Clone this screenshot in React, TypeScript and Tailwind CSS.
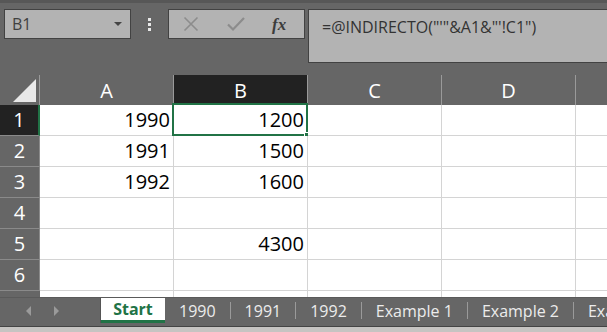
import React from "react";

const cols = ["A", "B", "C", "D"];
const data: Record<number, [string, string]> = {
  1: ["1990", "1200"],
  2: ["1991", "1500"],
  3: ["1992", "1600"],
  5: ["", "4300"],
};

function Row({ n }: { n: number }) {
  const d = data[n] || ["", ""];
  const sel = n === 1;
  return (
    <div className="flex h-[31px]">
      <div
        className={
          sel
            ? "w-[40px] h-full shrink-0 bg-[#222222] text-white flex items-center justify-center border-b border-[#8a8a8a] border-r-2 border-r-[#217346] text-[20px] leading-none"
            : "w-[40px] h-full shrink-0 bg-[#666666] text-white flex items-center justify-center border-b border-[#8a8a8a] border-r border-r-[#8a8a8a] text-[20px] leading-none"
        }
      >
        {n}
      </div>
      {[0, 1, 2, 3].map((i) => (
        <div
          key={i}
          className="relative w-[134px] h-full shrink-0 bg-white border-r border-b border-[#d4d4d4] flex items-end justify-end pr-[3px] pb-[5px] text-[20px] leading-none text-black"
        >
          {i < 2 ? d[i] : ""}
          {sel && i === 1 && (
            <>
              <div className="absolute left-[-2px] top-[-2px] w-[136px] h-[33px] border-2 border-[#217346]" />
              <div className="absolute right-[-4px] bottom-[-4px] w-[7px] h-[7px] bg-[#217346] border border-white" />
            </>
          )}
        </div>
      ))}
      <div className="flex-1 h-full bg-white border-b border-[#d4d4d4]" />
    </div>
  );
}

export default function App() {
  const tabs = ["1990", "1991", "1992", "Example 1", "Example 2", "Example 3"];
  return (
    <div className="w-[607px] h-[332px] overflow-hidden bg-[#666666] font-['Open_Sans',sans-serif] flex flex-col">
      <div className="h-[3px] bg-[#575757] shrink-0" />
      {/* top formula area */}
      <div className="h-[72px] shrink-0 flex items-start pt-[6px]">
        <div className="ml-[4px] w-[127px] h-[30px] shrink-0 border border-[#424242] bg-[#b3b3b3] flex items-center pl-[7px] pr-[8px]">
          <span className="text-[16px] text-[#404040] leading-none">B1</span>
          <span className="ml-auto w-0 h-0 border-l-[4px] border-r-[4px] border-t-[4px] border-l-transparent border-r-transparent border-t-[#444444]" />
        </div>
        <div className="w-[37px] h-[30px] shrink-0 flex flex-col items-center justify-center gap-[2px]">
          <span className="w-[3px] h-[3px] bg-[#e8e8e8]" />
          <span className="w-[3px] h-[3px] bg-[#e8e8e8]" />
          <span className="w-[3px] h-[3px] bg-[#e8e8e8]" />
        </div>
        <div className="w-[137px] h-[30px] shrink-0 border border-[#424242] bg-[#b3b3b3] flex items-center">
          <svg width="16" height="16" viewBox="0 0 16 16" className="ml-[14px]">
            <path d="M1.5 1.5 L14.5 14.5 M14.5 1.5 L1.5 14.5" stroke="#8c8c8c" strokeWidth="1.6" fill="none" />
          </svg>
          <svg width="18" height="16" viewBox="0 0 18 16" className="ml-[28px]">
            <path d="M1 8.5 L6 13.5 L17 2" stroke="#8c8c8c" strokeWidth="2.2" fill="none" />
          </svg>
          <span className="ml-[27px] font-['Liberation_Serif',serif] italic font-bold text-[17px] text-[#3c3c3c] leading-none">
            fx
          </span>
        </div>
        <div className="ml-[3px] flex-1 h-[54px] border border-[#424242] border-r-0 bg-[#b3b3b3] pl-[13px] pt-[5px]">
          <span className="text-[16px] text-[#333333] leading-none">=@INDIRECTO("'"&amp;A1&amp;"'!C1")</span>
        </div>
      </div>
      {/* column header */}
      <div className="h-[30px] shrink-0 flex">
        <div className="w-[40px] h-full shrink-0 border-r border-[#9a9a9a] flex items-end justify-end pr-[3px] pb-[3px]">
          <div className="w-0 h-0 border-l-[23px] border-t-[23px] border-l-transparent border-t-transparent border-b-0 border-r-0 relative">
            <div className="absolute right-0 bottom-0 w-0 h-0 border-l-[23px] border-b-[23px] border-l-transparent border-b-[#e8e8e8]" />
          </div>
        </div>
        {cols.map((c) => (
          <div
            key={c}
            className={
              c === "B"
                ? "w-[134px] h-full shrink-0 bg-[#222222] border-r border-[#9a9a9a] flex items-center justify-center text-white text-[20px] leading-none pt-[2px]"
                : "w-[134px] h-full shrink-0 border-r border-[#9a9a9a] flex items-center justify-center text-white text-[20px] leading-none pt-[2px]"
            }
          >
            {c}
          </div>
        ))}
        <div className="flex-1" />
      </div>
      {/* rows */}
      <div className="shrink-0">
        {[1, 2, 3, 4, 5, 6].map((n) => (
          <Row key={n} n={n} />
        ))}
        <div className="flex h-[6px]">
          <div className="w-[40px] shrink-0 bg-[#666666]" />
          {[0, 1, 2, 3].map((i) => (
            <div key={i} className="w-[134px] shrink-0 bg-white border-r border-[#d4d4d4]" />
          ))}
          <div className="flex-1 bg-white" />
        </div>
      </div>
      {/* tab bar */}
      <div className="h-[29px] shrink-0 bg-[#666666] border-t border-[#5a5a5a] flex items-start">
        <div className="w-[101px] h-[25px] shrink-0 flex items-center border-r border-[#555555]">
          <span className="ml-[26px] w-0 h-0 border-t-[5px] border-b-[5px] border-r-[5px] border-t-transparent border-b-transparent border-r-[#9a9a9a]" />
          <span className="ml-[23px] w-0 h-0 border-t-[5px] border-b-[5px] border-l-[5px] border-t-transparent border-b-transparent border-l-[#9a9a9a]" />
        </div>
        <div className="w-[64px] h-[25px] shrink-0 bg-white border-b-[3px] border-[#217346] flex items-center justify-center text-[16px] font-bold text-[#217346] leading-none">
          Start
        </div>
        {tabs.map((t, i) => (
          <div key={t} className="h-[25px] shrink-0 flex items-center">
            {i > 0 && <span className="w-px h-[17px] bg-[#9a9a9a]" />}
            <span className="px-[14px] text-[16px] text-[#ececec] leading-none">
              {t}
            </span>
          </div>
        ))}
      </div>
      <div className="flex-1 bg-[#c6c4c2] border-t border-[#444444]" />
    </div>
  );
}
